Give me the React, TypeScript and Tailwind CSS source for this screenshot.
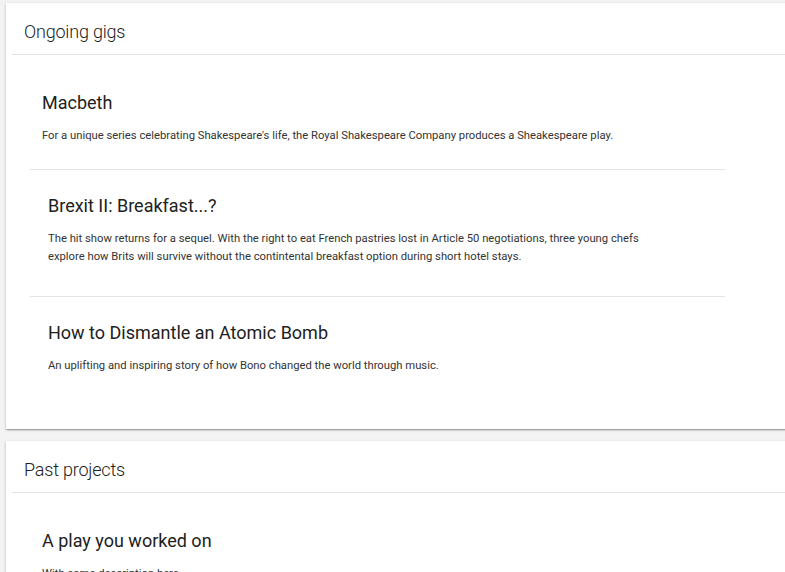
type Gig = { title: string; text: string; pad: string; after: string };

const ongoing: Gig[] = [
  {
    title: 'Macbeth',
    text: "For a unique series celebrating Shakespeare's life, the Royal Shakespeare Company produces a Sheakespeare play.",
    pad: 'pt-[36px] pl-[12px]',
    after: 'pb-[24px]',
  },
  {
    title: 'Brexit II: Breakfast...?',
    text: 'The hit show returns for a sequel. With the right to eat French pastries lost in Article 50 negotiations, three young chefs explore how Brits will survive without the contintental breakfast option during short hotel stays.',
    pad: 'pt-[24px] pl-[18px]',
    after: 'pb-[30px]',
  },
  {
    title: 'How to Dismantle an Atomic Bomb',
    text: 'An uplifting and inspiring story of how Bono changed the world through music.',
    pad: 'pt-[24px] pl-[18px]',
    after: 'pb-[54px]',
  },
];

const past: Gig[] = [
  {
    title: 'A play you worked on',
    text: 'With some description here.',
    pad: 'pt-[36px] pl-[12px]',
    after: 'pb-[40px]',
  },
];

function Card({ heading, items }: { heading: string; items: Gig[] }) {
  return (
    <section className="bg-white mr-[-40px] shadow-[0_1px_3px_rgba(0,0,0,0.2),0_1px_1px_rgba(0,0,0,0.14),0_2px_1px_-1px_rgba(0,0,0,0.12)]">
      <div className="mx-[6px] border-b border-[#e3e3e3] px-[12px] pt-[17px] pb-[10px]">
        <h2 className="text-[18px] leading-[24px] font-light tracking-[-0.2px] text-[#212121]">{heading}</h2>
      </div>
      <ul className="mx-[24px] w-[695px]">
        {items.map((g, i) => (
          <li
            key={g.title}
            className={`${g.pad} ${g.after} ${i < items.length - 1 ? 'border-b border-[#e3e3e3]' : ''}`}
          >
            <h3 className="text-[18px] leading-[24px] text-[#212121]">{g.title}</h3>
            <p className="mt-[12px] max-w-[620px] text-[11.25px] leading-[18px] text-[#333333]">{g.text}</p>
          </li>
        ))}
      </ul>
    </section>
  );
}

export default function App() {
  return (
    <div className="min-h-screen overflow-hidden bg-[#f3f3f3] pt-[3px] pl-[6px] font-['Roboto',sans-serif]">
      <div className="flex flex-col gap-[12px]">
        <Card heading="Ongoing gigs" items={ongoing} />
        <Card heading="Past projects" items={past} />
      </div>
    </div>
  );
}
